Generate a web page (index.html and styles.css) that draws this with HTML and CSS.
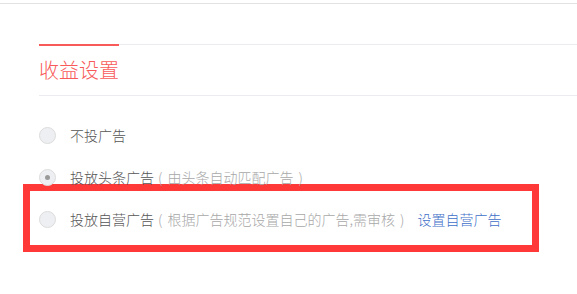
FILE: index.html
```html
<!DOCTYPE html>
<html lang="zh-CN">
<head>
<meta charset="utf-8">
<title>收益设置</title>
<link rel="stylesheet" href="styles.css">
</head>
<body>
<div class="topbar"></div>
<section class="section">
  <div class="tabs">
    <div class="tab">收益设置</div>
  </div>
  <div class="options">
    <div class="option">
      <span class="radio"></span>
      <span class="label">不投广告</span>
    </div>
    <div class="option">
      <span class="radio checked"></span>
      <span class="label">投放头条广告</span>
      <span class="hint">( 由头条自动匹配广告 )</span>
    </div>
    <div class="highlight">
      <div class="option">
        <span class="radio"></span>
        <span class="label">投放自营广告</span>
        <span class="hint">( 根据广告规范设置自己的广告,需审核 )</span>
        <a class="link" href="#">设置自营广告</a>
      </div>
    </div>
  </div>
</section>
</body>
</html>
```
FILE: styles.css
```css
html, body {
  margin: 0;
  padding: 0;
  background: #fff;
}
html {
  min-height: 100%;
}
body {
  min-height: 294px;
  font-family: "Noto Sans CJK SC", "Liberation Sans", sans-serif;
  color: #333;
}
.topbar {
  height: 3px;
  border-bottom: 1px solid #e2e2e2;
}
.section {
  margin-top: 40px;
  padding-left: 39px;
  padding-bottom: 40px;
}
.tabs {
  display: flex;
  height: 50px;
  border-top: 1px solid #ececf0;
  border-bottom: 1px solid #ececf0;
}
.tab {
  width: 80px;
  margin-top: -1px;
  border-top: 2px solid #f85959;
  line-height: 48px;
  font-size: 20px;
  font-weight: 300;
  color: #f85959;
  white-space: nowrap;
}
.options {
  margin-top: 18px;
}
.option {
  display: flex;
  align-items: center;
  height: 42px;
  font-size: 14px;
  font-weight: 300;
  white-space: nowrap;
}
.radio {
  box-sizing: border-box;
  width: 17px;
  height: 17px;
  margin-right: 14px;
  border: 1px solid #dcdcdc;
  border-radius: 50%;
  background: #eeeff2;
  display: flex;
  align-items: center;
  justify-content: center;
}
.radio.checked::after {
  content: "";
  width: 5px;
  height: 5px;
  border-radius: 50%;
  background: #9a9a9a;
}
.label {
  color: #555;
}
.hint {
  color: #a8a8a8;
  margin-left: 4px;
  word-spacing: 2px;
}
.link {
  margin-left: 13px;
  color: #4070c8;
  text-decoration: none;
}
.highlight {
  box-sizing: border-box;
  width: 516px;
  margin: -14px 0 0 -16px;
  padding: 7px 0 5px 9px;
  border: 7px solid #ff3838;
}
```
